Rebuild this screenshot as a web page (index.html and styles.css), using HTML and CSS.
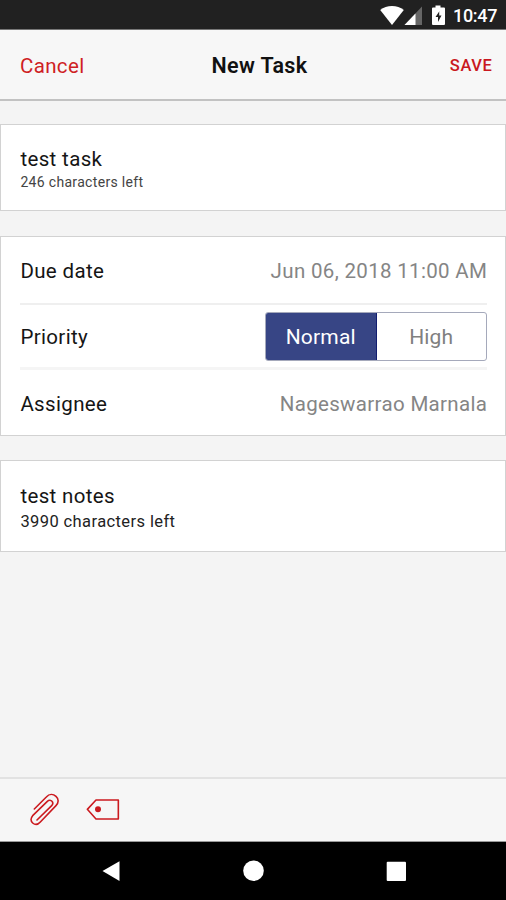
FILE: index.html
```html
<!DOCTYPE html>
<html lang="en">
<head>
<meta charset="utf-8">
<title>New Task</title>
<link rel="stylesheet" href="styles.css">
</head>
<body>
<div class="screen">
  <div class="status">
    <svg class="status-icons" viewBox="0 0 68 22" width="68" height="22">
      <path d="M1.2 6C7.500.5 18.500.5 24.800 6L13 21Z" fill="#fff"/>
      <path d="M43 2.500V21H25.500Z" fill="#666"/>
      <path d="M36.500 9.500V21H25.500Z" fill="#fff"/>
      <path d="M56.500 1.500h5v2h3.500q1 0 1 1V20q0 1-1 1H54q-1 0-1-1V4.500q0-1 1-1h2.500Z" fill="#fff"/>
      <path d="M60.500 7L56.500 13h2.500v5l3.500-6.500h-2.300V7Z" fill="#222"/>
    </svg>
    <span class="clock">10:47</span>
  </div>
  <header class="header">
    <a class="cancel">Cancel</a>
    <h1 class="title">New Task</h1>
    <a class="save">SAVE</a>
  </header>
  <main class="content">
    <section class="card card-task">
      <div class="name">test task</div>
      <div class="hint">246 characters left</div>
    </section>
    <section class="card card-details">
      <div class="row row-due"><span class="label">Due date</span><span class="value">Jun 06, 2018 11:00 AM</span></div>
      <div class="row row-priority"><span class="label">Priority</span>
        <div class="segment"><span class="option selected">Normal</span><span class="option">High</span></div>
      </div>
      <div class="row row-assignee"><span class="label">Assignee</span><span class="value">Nageswarrao Marnala</span></div>
    </section>
    <section class="card card-notes">
      <div class="name">test notes</div>
      <div class="hint hint-notes">3990 characters left</div>
    </section>
  </main>
  <footer class="tools">
    <svg viewBox="90 69 90 99" width="30" height="33" class="tool-icon">
      <path d="M103 117L139 81C148 71 160 72 168 79C177 87 176 99 168 107L121 156C114 164 105 165 98 159C91 153 92 144 98 137L142 94C147 89 153 90 156 94C160 99 159 103 155 107L111 150"/>
    </svg>
    <svg viewBox="258 84 102 69" width="34" height="23" class="tool-icon tag">
      <path d="M262 118L288 90H355V147H288Z"/><circle cx="294" cy="118" r="9"/>
    </svg>
  </footer>
  <nav class="nav">
    <svg viewBox="0 0 506 58" width="506" height="58">
      <path d="M102.500 29L119.500 19.300V39Z"/><circle cx="253.500" cy="28.800" r="10.300"/><rect x="386.700" y="19.700" width="19.300" height="19.300" rx="1"/>
    </svg>
  </nav>
</div>
</body>
</html>
```
FILE: styles.css
```css
* { box-sizing: border-box; }
body { margin: 0; font-family: Roboto, sans-serif; color: #151515; }
.screen { display: flex; flex-direction: column; width: 506px; height: 900px; background: #f4f4f4; overflow: hidden; }
.status { display: flex; height: 30px; padding: 4px 9px 0 0; justify-content: flex-end; background: #212121; border-bottom: 1px solid #777; }
.status-icons { margin-right: 6px; }
.clock { color: #fff; font-size: 18px; font-weight: 500; line-height: 24px; width: 44px; letter-spacing: -.3px; white-space: nowrap; }
.header { display: grid; grid-template-columns: 1fr auto 1fr; align-items: center; height: 71px; padding: 1px 14px 0 20px; background: #f7f7f7; border-bottom: 2px solid #c2c2c2; }
.cancel { padding-top: 2px; color: #cf1f25; font-size: 20.5px; letter-spacing: .35px; }
.title { margin: 0 0 0 7px; color: #111; font-size: 21.5px; font-weight: 600; letter-spacing: .35px; }
.save { justify-self: end; color: #c91820; font-size: 16.5px; font-weight: 500; letter-spacing: .6px; margin-right: -.5px; }
.content { flex: 1; padding-top: 23px; }
.card { background: #fff; border: 1px solid #d2d2d2; padding-left: 19.400px; }
.card-task { height: 87px; padding-top: 22px; }
.card-details { height: 200px; margin-top: 25px; padding-right: 18px; }
.card-notes { height: 92px; margin-top: 24px; padding-top: 23px; }
.name { font-size: 20.5px; line-height: 25px; letter-spacing: .35px; }
.hint { font-size: 14px; line-height: 21px; color: #444; letter-spacing: .32px; }
.hint-notes { font-size: 16.5px; line-height: 25px; color: #222; letter-spacing: .4px; }
.row { display: flex; align-items: center; justify-content: space-between; height: 66px; }
.row-due { padding-top: 2px; }
.row-assignee { padding-top: 1px; }
.row-priority { height: 67px; border-top: 2px solid #efefef; border-bottom: 3px solid #f5f5f5; }
.row-priority .label { padding-top: 2px; }
.label { font-size: 20.5px; letter-spacing: .35px; }
.value { color: #858585; font-size: 20.5px; letter-spacing: .33px; margin-right: -.3px; }
.segment { display: flex; width: 222px; height: 49px; border: 1px solid #a5a9bb; border-radius: 3px; overflow: hidden; }
.option { flex: 1; display: flex; align-items: center; justify-content: center; padding-top: 2px; color: #808080; font-size: 21px; letter-spacing: .2px; }
.selected { background: #374585; color: #fff; border-right: 1px solid #111d70; }
.tools { display: flex; height: 65px; padding: 14px 0 0 30px; border-top: 2px solid #e2e2e2; border-bottom: 1px solid #999; background: #f6f6f6; }
.tool-icon { fill: none; stroke: #cb1a1f; stroke-width: 4.800; stroke-linejoin: round; stroke-linecap: round; }
.tag { margin: 5px 0 0 26px; }
.tag circle { fill: #cb1a1f; stroke: none; }
.nav { height: 58px; background: #000; }
.nav svg { display: block; fill: #fff; }
```
